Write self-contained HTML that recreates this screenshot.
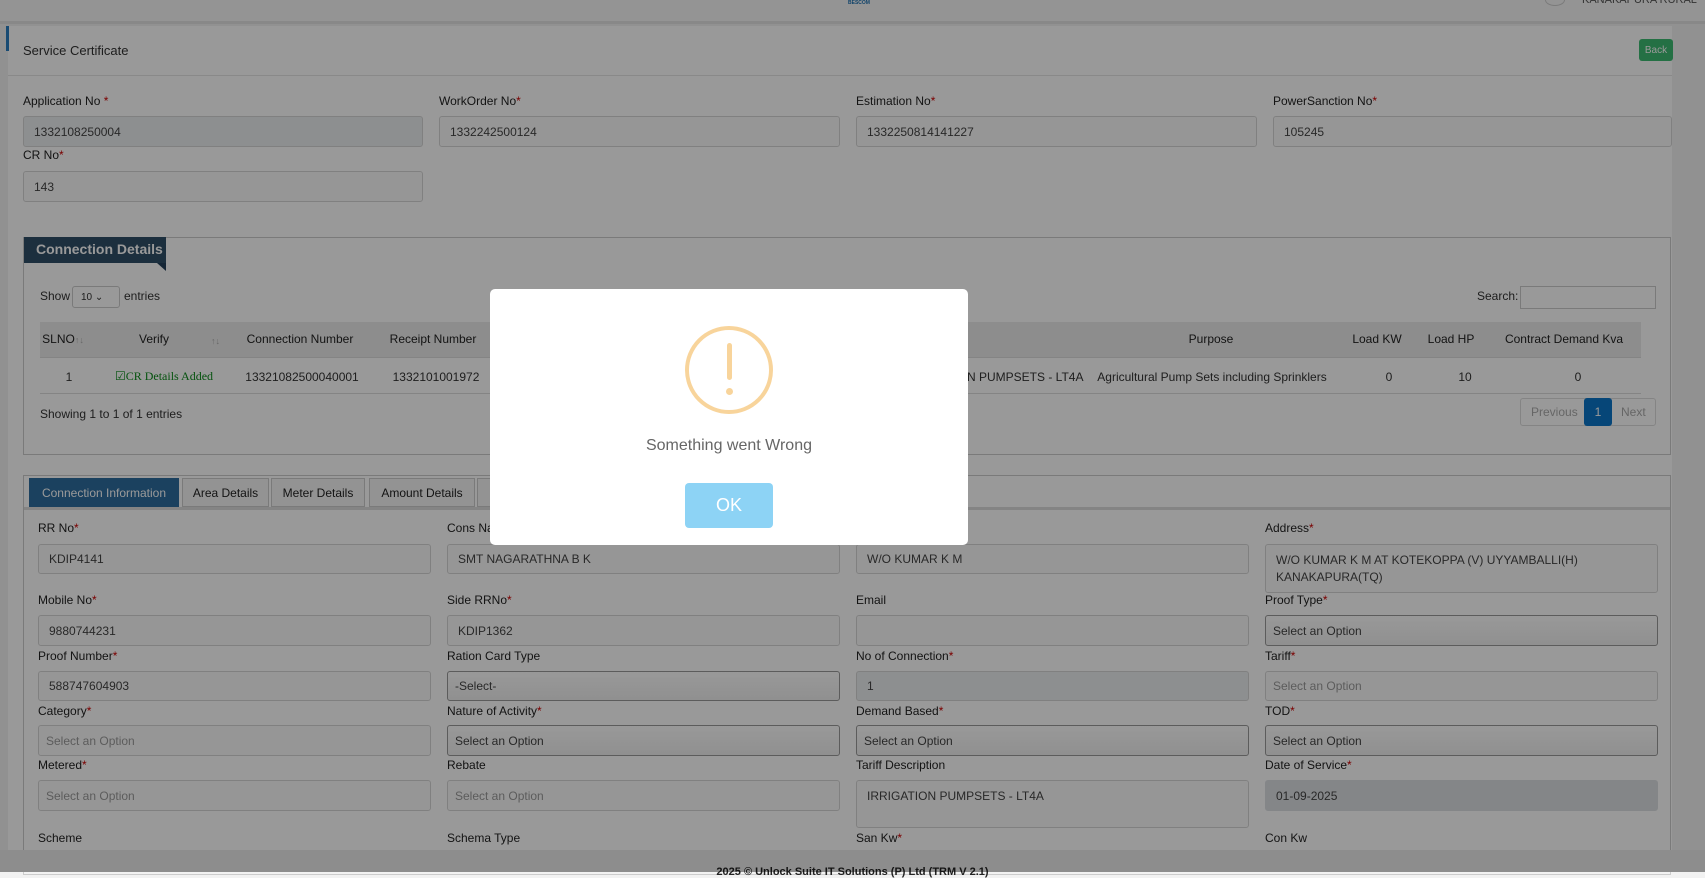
<!DOCTYPE html>
<html><head><meta charset="utf-8"><style>
*{box-sizing:border-box;margin:0;padding:0}
body{width:1705px;height:872px;overflow:hidden;font-family:"Liberation Sans",Arial,sans-serif;font-size:12px;color:#333;background:#f2f2f2;position:relative}
.abs{position:absolute}
.hdr{left:0;top:0;width:1705px;height:24px;background:#f7f7f7;border-bottom:3px solid #e3e3e3}
.panel{left:8px;top:26px;width:1664px;height:830px;background:#fff}
.lbl{position:absolute;font-size:12px;color:#222}
.lbl b{color:#c00;font-weight:normal}
.inp{position:absolute;border:1px solid #d6d6d6;border-radius:3px;background:#fff;font-size:12px;color:#444;padding:0 10px;display:flex;align-items:center}
.ro{background:#fbfbfb}
.dis{background:#eceef1}
.sel{border:1px solid #999;background:linear-gradient(#fff,#f0f0f0);color:#444;padding-left:7px}
.ph{color:#999}
.th{position:absolute;font-size:12px;color:#222;transform:translateX(-50%)}
.td{position:absolute;font-size:12px;color:#333;transform:translateX(-50%)}
.tab{position:absolute;top:478px;height:29px;border:1px solid #ccc;background:#f5f5f5;font-size:12px;display:flex;align-items:center;justify-content:center;color:#222}
.ov{left:0;top:0;width:1705px;height:872px;background:rgba(0,0,0,0.4)}
</style></head><body>
<div class="abs hdr"></div>
<div class="abs" style="left:848px;top:0;font-size:5px;color:#1a6fb0;font-weight:bold">BESCOM</div>
<div class="abs" style="left:1545px;top:-6px;width:20px;height:12px;border:1px solid #ccc;border-radius:50%"></div>
<div class="abs" style="left:1582px;top:-6px;font-size:11px;color:#555">KANAKAPURA RURAL</div>
<div class="abs panel"></div>
<div class="abs" style="left:8px;top:26px;width:1664px;height:50px;border-bottom:1px solid #e5e5e5"></div>
<div class="abs" style="left:6px;top:26px;width:3px;height:25px;background:#2a7dc0"></div>
<div class="abs" style="left:23px;top:43px;font-size:13px;color:#333">Service Certificate</div>
<div class="abs" style="left:1639px;top:39px;width:34px;height:22px;background:#3dbb72;border-radius:3px;color:#fff;font-size:10px;display:flex;align-items:center;justify-content:center">Back</div>

<div class="lbl" style="left:23px;top:94px">Application No <b>*</b></div>
<div class="inp dis" style="left:23px;top:116px;width:400px;height:31px">1332108250004</div>
<div class="lbl" style="left:439px;top:94px">WorkOrder No<b>*</b></div>
<div class="inp ro" style="left:439px;top:116px;width:401px;height:31px">1332242500124</div>
<div class="lbl" style="left:856px;top:94px">Estimation No<b>*</b></div>
<div class="inp ro" style="left:856px;top:116px;width:401px;height:31px">1332250814141227</div>
<div class="lbl" style="left:1273px;top:94px">PowerSanction No<b>*</b></div>
<div class="inp ro" style="left:1273px;top:116px;width:399px;height:31px">105245</div>
<div class="lbl" style="left:23px;top:148px">CR No<b>*</b></div>
<div class="inp ro" style="left:23px;top:171px;width:400px;height:31px">143</div>

<div class="abs" style="left:23px;top:237px;width:1648px;height:218px;border:1px solid #ccc"></div>
<div class="abs" style="left:24px;top:237px;width:142px;height:26px;background:#2f4f68;color:#fff;font-size:14px;font-weight:bold;padding:4px 0 0 12px">Connection Details</div>
<div class="abs" style="left:157px;top:263px;width:0;height:0;border-top:8px solid #24405a;border-left:9px solid transparent"></div>
<div class="abs" style="left:40px;top:289px;font-size:12px">Show</div>
<div class="abs" style="left:72px;top:286px;width:48px;height:22px;border:1px solid #ccc;border-radius:3px;font-size:10px;padding:5px 0 0 8px">10 &#8964;</div>
<div class="abs" style="left:124px;top:289px;font-size:12px">entries</div>
<div class="abs" style="left:1477px;top:289px;font-size:12px">Search:</div>
<div class="abs" style="left:1520px;top:286px;width:136px;height:23px;border:1px solid #ccc"></div>
<div class="abs" style="left:40px;top:322px;width:1601px;height:36px;background:#ececec;border-bottom:1px solid #ddd"></div>
<div class="abs" style="left:40px;top:358px;width:1601px;height:36px;border-bottom:1px solid #ddd"></div>
<div class="th" style="left:63px;top:332px">SLNO<span style="color:#aaa;font-size:9px">↑↓</span></div>
<div class="th" style="left:154px;top:332px">Verify</div>
<div class="abs" style="left:211px;top:336px;color:#aaa;font-size:9px">↑↓</div>
<div class="th" style="left:300px;top:332px">Connection Number</div>
<div class="th" style="left:433px;top:332px">Receipt Number</div>
<div class="th" style="left:1211px;top:332px">Purpose</div>
<div class="th" style="left:1377px;top:332px">Load KW</div>
<div class="th" style="left:1451px;top:332px">Load HP</div>
<div class="th" style="left:1564px;top:332px">Contract Demand Kva</div>
<div class="td" style="left:69px;top:370px">1</div>
<div class="td" style="left:164px;top:369px;color:#0a8a1a;font-family:'Liberation Serif',serif">☑CR Details Added</div>
<div class="td" style="left:302px;top:370px">13321082500040001</div>
<div class="td" style="left:436px;top:370px">1332101001972</div>
<div class="td" style="left:995px;top:370px">IRRIGATION PUMPSETS - LT4A</div>
<div class="td" style="left:1212px;top:370px">Agricultural Pump Sets including Sprinklers</div>
<div class="td" style="left:1389px;top:370px">0</div>
<div class="td" style="left:1465px;top:370px">10</div>
<div class="td" style="left:1578px;top:370px">0</div>
<div class="abs" style="left:40px;top:407px;font-size:12px">Showing 1 to 1 of 1 entries</div>
<div class="abs" style="left:1520px;top:398px;width:136px;height:28px;border:1px solid #ddd;border-radius:3px"></div>
<div class="abs" style="left:1531px;top:405px;color:#aaa;font-size:12px">Previous</div>
<div class="abs" style="left:1584px;top:398px;width:28px;height:28px;background:#0b75c9;border-radius:3px;color:#fff;text-align:center;line-height:28px">1</div>
<div class="abs" style="left:1621px;top:405px;color:#aaa;font-size:12px">Next</div>

<div class="abs" style="left:23px;top:475px;width:1648px;height:400px;border:1px solid #ccc"></div>
<div class="abs" style="left:24px;top:507px;width:1646px;height:3px;background:#ddd"></div>
<div class="tab" style="left:29px;width:150px;background:#2e6d9e;color:#fff;border-color:#2e6d9e">Connection Information</div>
<div class="tab" style="left:182px;width:87px">Area Details</div>
<div class="tab" style="left:271px;width:94px">Meter Details</div>
<div class="tab" style="left:369px;width:106px">Amount Details</div>
<div class="tab" style="left:477px;width:60px"></div>

<div class="lbl" style="left:38px;top:521px">RR No<b>*</b></div>
<div class="inp ro" style="left:38px;top:544px;width:393px;height:30px">KDIP4141</div>
<div class="lbl" style="left:447px;top:521px">Cons Name<b>*</b></div>
<div class="inp ro" style="left:447px;top:544px;width:393px;height:30px">SMT NAGARATHNA B K</div>
<div class="lbl" style="left:856px;top:521px">Father Name<b>*</b></div>
<div class="inp ro" style="left:856px;top:544px;width:393px;height:30px">W/O KUMAR K M</div>
<div class="lbl" style="left:1265px;top:521px">Address<b>*</b></div>
<div class="inp ro" style="left:1265px;top:544px;width:393px;height:49px;line-height:17px">W/O KUMAR K M AT KOTEKOPPA (V) UYYAMBALLI(H) KANAKAPURA(TQ)</div>

<div class="lbl" style="left:38px;top:593px">Mobile No<b>*</b></div>
<div class="inp ro" style="left:38px;top:615px;width:393px;height:31px">9880744231</div>
<div class="lbl" style="left:447px;top:593px">Side RRNo<b>*</b></div>
<div class="inp ro" style="left:447px;top:615px;width:393px;height:31px">KDIP1362</div>
<div class="lbl" style="left:856px;top:593px">Email</div>
<div class="inp ro" style="left:856px;top:615px;width:393px;height:31px"></div>
<div class="lbl" style="left:1265px;top:593px">Proof Type<b>*</b></div>
<div class="inp sel" style="left:1265px;top:615px;width:393px;height:31px">Select an Option</div>

<div class="lbl" style="left:38px;top:649px">Proof Number<b>*</b></div>
<div class="inp ro" style="left:38px;top:671px;width:393px;height:30px">588747604903</div>
<div class="lbl" style="left:447px;top:649px">Ration Card Type</div>
<div class="inp sel" style="left:447px;top:671px;width:393px;height:30px">-Select-</div>
<div class="lbl" style="left:856px;top:649px">No of Connection<b>*</b></div>
<div class="inp dis" style="left:856px;top:671px;width:393px;height:30px">1</div>
<div class="lbl" style="left:1265px;top:649px">Tariff<b>*</b></div>
<div class="inp ro ph" style="left:1265px;top:671px;width:393px;height:30px;padding-left:7px">Select an Option</div>

<div class="lbl" style="left:38px;top:704px">Category<b>*</b></div>
<div class="inp ro ph" style="left:38px;top:725px;width:393px;height:31px;padding-left:7px">Select an Option</div>
<div class="lbl" style="left:447px;top:704px">Nature of Activity<b>*</b></div>
<div class="inp sel" style="left:447px;top:725px;width:393px;height:31px">Select an Option</div>
<div class="lbl" style="left:856px;top:704px">Demand Based<b>*</b></div>
<div class="inp sel" style="left:856px;top:725px;width:393px;height:31px">Select an Option</div>
<div class="lbl" style="left:1265px;top:704px">TOD<b>*</b></div>
<div class="inp sel" style="left:1265px;top:725px;width:393px;height:31px">Select an Option</div>

<div class="lbl" style="left:38px;top:758px">Metered<b>*</b></div>
<div class="inp ro ph" style="left:38px;top:780px;width:393px;height:31px;padding-left:7px">Select an Option</div>
<div class="lbl" style="left:447px;top:758px">Rebate</div>
<div class="inp ro ph" style="left:447px;top:780px;width:393px;height:31px;padding-left:7px">Select an Option</div>
<div class="lbl" style="left:856px;top:758px">Tariff Description</div>
<div class="inp ro" style="left:856px;top:780px;width:393px;height:48px;align-items:flex-start;padding-top:8px">IRRIGATION PUMPSETS - LT4A</div>
<div class="lbl" style="left:1265px;top:758px">Date of Service<b>*</b></div>
<div class="inp" style="left:1265px;top:780px;width:393px;height:31px;background:#dcdfe3;border-color:#dcdfe3">01-09-2025</div>

<div class="lbl" style="left:38px;top:831px">Scheme</div>
<div class="lbl" style="left:447px;top:831px">Schema Type</div>
<div class="lbl" style="left:856px;top:831px">San Kw<b>*</b></div>
<div class="lbl" style="left:1265px;top:831px">Con Kw</div>

<div class="abs" style="left:0;top:850px;width:1705px;height:22px;background:#ececec;text-align:center;font-size:11px;font-weight:bold;padding-top:16px;color:#222">2025 © Unlock Suite IT Solutions (P) Ltd (TRM V 2.1)</div>

<div class="abs ov"></div>

<div class="abs" style="left:490px;top:289px;width:478px;height:256px;background:#fff;border-radius:5px"></div>
<div class="abs" style="left:685px;top:326px;width:88px;height:88px;border:4px solid #f8d49b;border-radius:50%"></div>
<div class="abs" style="left:727px;top:343px;width:5px;height:37px;background:#f8d49b;border-radius:3px"></div>
<div class="abs" style="left:726px;top:388px;width:7px;height:7px;background:#f8d49b;border-radius:50%"></div>
<div class="abs" style="left:490px;top:437px;width:478px;text-align:center;font-size:16px;color:#666">Something went Wrong</div>
<div class="abs" style="left:685px;top:483px;width:88px;height:45px;background:#8dd3f5;border-radius:4px;color:#fff;font-size:18px;text-align:center;line-height:45px">OK</div>
</body></html>
